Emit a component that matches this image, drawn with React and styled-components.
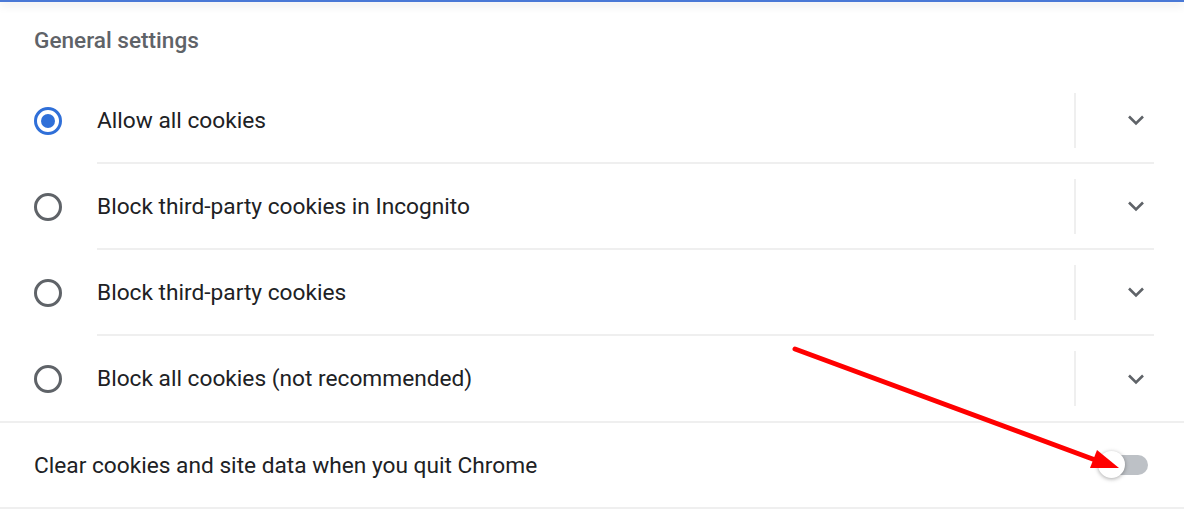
import React from 'react';
import styled, { createGlobalStyle } from 'styled-components';

const Global = createGlobalStyle`
  html, body {
    margin: 0;
    padding: 0;
    background: #fff;
  }
  body {
    font-family: Roboto, "Liberation Sans", Arial, sans-serif;
    color: #202124;
  }
`;

const Page = styled.div`
  position: relative;
  width: 1184px;
  height: 512px;
  overflow: hidden;
  background: #fff;
`;

const TopEdge = styled.div`
  height: 2px;
  background: #4a79d6;
  box-shadow: 0 2px 8px rgba(60, 64, 67, 0.25);
`;

const Heading = styled.h2`
  margin: 0;
  height: 76px;
  display: flex;
  align-items: center;
  padding-left: 34px;
  font-size: 22.6px;
  font-weight: 500;
  color: #5f6368;
`;

const Row = styled.div`
  display: flex;
  align-items: stretch;
  height: ${p => (p.last ? '85px' : '86px')};
  padding-left: 34px;
`;

const RadioCell = styled.div`
  width: 63px;
  display: flex;
  align-items: center;
`;

const Radio = styled.span`
  box-sizing: border-box;
  width: 28px;
  height: 28px;
  border-radius: 50%;
  border: 3px solid ${p => (p.checked ? '#2f6fd8' : '#5f6368')};
  display: flex;
  align-items: center;
  justify-content: center;

  &::after {
    content: '';
    width: 14px;
    height: 14px;
    border-radius: 50%;
    background: #2f6fd8;
    display: ${p => (p.checked ? 'block' : 'none')};
  }
`;

const RowBody = styled.div`
  flex: 1;
  display: flex;
  align-items: center;
  margin-right: 30px;
  border-bottom: ${p => (p.last ? 'none' : '2px solid #efefef')};
`;

const Label = styled.span`
  flex: 1;
  font-size: 22.7px;
  color: #202124;
`;

const Separator = styled.div`
  width: 2px;
  height: 55px;
  background: #efefef;
`;

const ExpandButton = styled.div`
  width: 78px;
  display: flex;
  justify-content: flex-end;
  padding-right: 9px;
  box-sizing: border-box;
`;

const ToggleRow = styled.div`
  display: flex;
  align-items: center;
  height: 84px;
  padding: 0 36px 0 34px;
  border-top: 2px solid #efefef;
  border-bottom: 2px solid #efefef;
`;

const ToggleLabel = styled.span`
  flex: 1;
  font-size: 22.7px;
  color: #202124;
`;

const Toggle = styled.div`
  position: relative;
  width: 42px;
  height: 20px;
  border-radius: 10px;
  background: #bdc1c6;
`;

const Knob = styled.span`
  position: absolute;
  left: -8px;
  top: -4px;
  width: 27px;
  height: 27px;
  border-radius: 50%;
  background: #fff;
  box-shadow: 0 1px 4px rgba(0, 0, 0, 0.35);
`;

const Overlay = styled.svg`
  position: absolute;
  left: 0;
  top: 0;
  pointer-events: none;
`;

const Chevron = () => (
  <svg width="18" height="12" viewBox="0 0 18 12">
    <path d="M2 2.5 L9 9.5 L16 2.5" fill="none" stroke="#5f6368" strokeWidth="2.6" />
  </svg>
);

const options = [
  { label: 'Allow all cookies', checked: true },
  { label: 'Block third-party cookies in Incognito' },
  { label: 'Block third-party cookies' },
  { label: 'Block all cookies (not recommended)' },
];

export default function App() {
  return (
    <Page>
      <Global />
      <TopEdge />
      <Heading>General settings</Heading>
      {options.map((o, i) => {
        const last = i === options.length - 1;
        return (
          <Row key={o.label} last={last}>
            <RadioCell>
              <Radio checked={o.checked} />
            </RadioCell>
            <RowBody last={last}>
              <Label>{o.label}</Label>
              <Separator />
              <ExpandButton>
                <Chevron />
              </ExpandButton>
            </RowBody>
          </Row>
        );
      })}
      <ToggleRow>
        <ToggleLabel>Clear cookies and site data when you quit Chrome</ToggleLabel>
        <Toggle>
          <Knob />
        </Toggle>
      </ToggleRow>
      <Overlay width="1184" height="512">
        <line x1="795" y1="349" x2="1098" y2="461" stroke="#ff0000" strokeWidth="5" strokeLinecap="round" />
        <polygon points="1119,468 1090,468 1097,450" fill="#ff0000" />
      </Overlay>
    </Page>
  );
}
